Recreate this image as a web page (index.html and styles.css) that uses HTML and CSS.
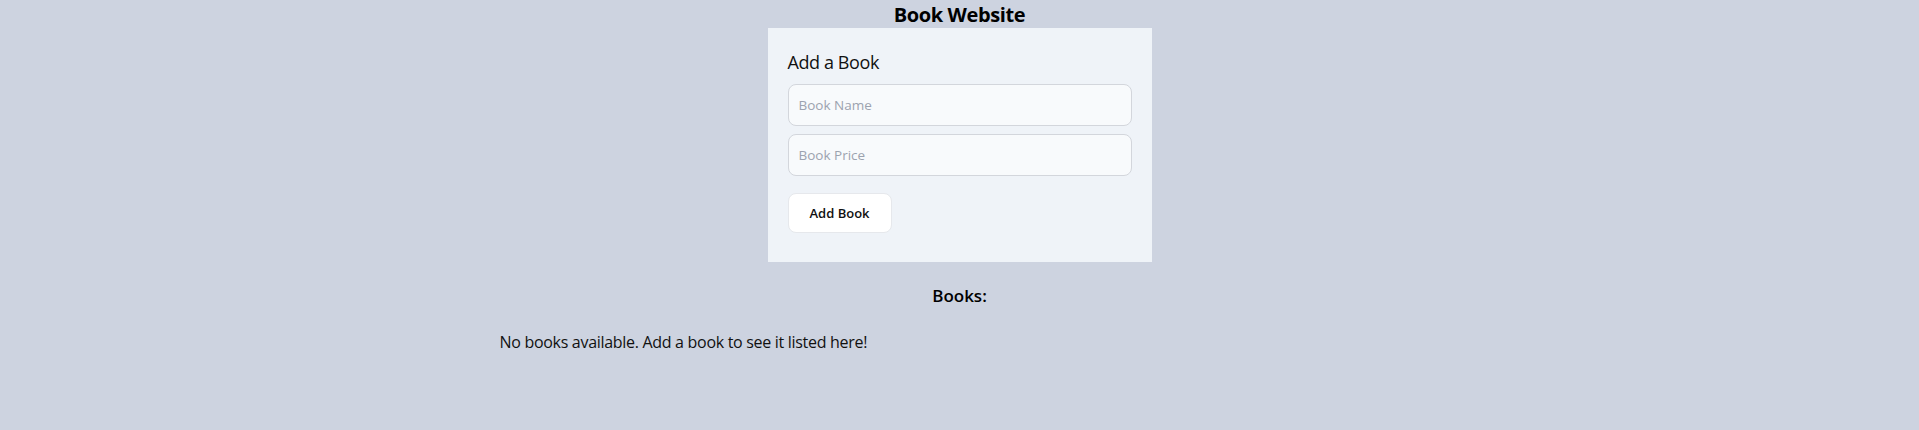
FILE: index.html
```html
<!DOCTYPE html>
<html lang="en">
<head>
<meta charset="utf-8">
<title>Book Website</title>
<link rel="stylesheet" href="styles.css">
</head>
<body>
<div class="app">
  <h1 class="title">Book Website</h1>
  <div class="card">
    <h2 class="card-title">Add a Book</h2>
    <input class="field" type="text" placeholder="Book Name">
    <input class="field" type="text" placeholder="Book Price">
    <button class="btn" type="button">Add Book</button>
  </div>
  <h3 class="books-title">Books:</h3>
  <div class="list">
    <p class="empty">No books available. Add a book to see it listed here!</p>
  </div>
</div>
</body>
</html>
```
FILE: styles.css
```css
html, body {
  margin: 0;
  padding: 0;
  background: #cdd3e0;
  font-family: "Open Sans", "Noto Sans", "Liberation Sans", sans-serif;
  color: #111;
}
.app {
  display: flex;
  flex-direction: column;
  align-items: center;
}
.title {
  margin: 0;
  font-size: 20px;
  line-height: 28px;
  font-weight: 700;
  color: #000;
  letter-spacing: -0.4px;
  padding-top: 1px;
  height: 27px;
}
.card {
  width: 384px;
  box-sizing: border-box;
  padding: 20px 20px 29px;
  background: #eff3f8;
  display: flex;
  flex-direction: column;
  align-items: flex-start;
  gap: 8px;
}
.card-title {
  margin: 0;
  font-size: 18px;
  line-height: 28px;
  font-weight: 400;
  color: #111;
  letter-spacing: -0.4px;
}
.field {
  width: 100%;
  box-sizing: border-box;
  height: 42px;
  padding: 0 10px;
  border: 1px solid #d3d6dc;
  border-radius: 8px;
  background: #f8fafc;
  font-family: inherit;
  font-size: 13.5px;
  color: #111;
  outline: none;
}
.field::placeholder {
  color: #9ca3af;
}
.btn {
  margin-top: 9px;
  width: 104px;
  height: 40px;
  box-sizing: border-box;
  border: 1px solid #e6e8ec;
  border-radius: 8px;
  background: #fff;
  font-family: inherit;
  font-size: 13px;
  font-weight: 600;
  color: #111;
  padding: 0;
}
.books-title {
  margin: 20px 0 0;
  font-size: 17px;
  line-height: 28px;
  font-weight: 600;
  color: #000;
}
.list {
  width: 960px;
  box-sizing: border-box;
  padding: 0 20px;
}
.empty {
  margin: 20px 0 0;
  font-size: 16px;
  line-height: 24px;
  color: #111;
  letter-spacing: -0.3px;
}
```
